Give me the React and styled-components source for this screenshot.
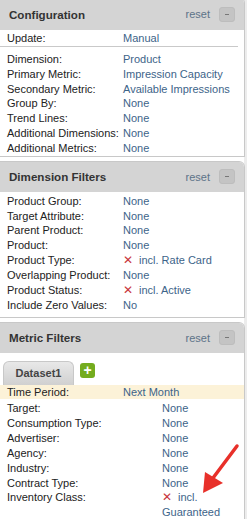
import React from 'react';
import styled, { createGlobalStyle } from 'styled-components';

const Global = createGlobalStyle`
  html, body {
    margin: 0;
    padding: 0;
    background: #fff;
    overflow: hidden;
  }
  body {
    font-family: "Liberation Sans", Arial, Helvetica, sans-serif;
    font-size: 11px;
    color: #222;
  }
`;

const Page = styled.div`
  width: 247px;
  height: 519px;
  overflow: hidden;
  position: relative;
  display: flex;
  flex-direction: column;
  gap: 4px;
  background: linear-gradient(to right, #fff 244px, #ececec 244px);
`;

const Panel = styled.div`
  width: 245px;
  box-sizing: border-box;
  border: 1px solid #c8c8c8;
  border-left: none;
  border-radius: 0 6px 0 0;
  background: #fff;
  margin-top: ${p => (p.$first ? '-3px' : '0')};
  flex-shrink: 0;
`;

const Header = styled.div`
  height: ${p => (p.$first ? '32px' : '30px')};
  box-sizing: border-box;
  padding: 0 9px 0 9px;
  display: flex;
  align-items: center;
  background: #d4d4d4;
  border-radius: 0 5px 0 0;
`;

const Title = styled.div`
  flex: 1;
  font-weight: bold;
  font-size: 11.6px;
  color: #333;
`;

const Reset = styled.span`
  color: #5d7388;
  font-size: 11px;
  margin-right: 9px;
`;

const MinusBtn = styled.span`
  width: 14px;
  height: 13px;
  border-radius: 3px;
  background: #c4c4c4;
  border: 1px solid #bdbdbd;
  display: flex;
  align-items: center;
  justify-content: center;
  &::after {
    content: '';
    width: 4px;
    height: 1px;
    background: #777;
  }
`;

const Body = styled.div`
  padding: ${p => p.$pad || '0'};
`;

const Row = styled.div`
  display: grid;
  grid-template-columns: ${p => p.$col || '116px'} 1fr;
  padding: 0 0 0 7px;
  line-height: 14.85px;
  font-size: 11px;
  background: ${p => (p.$hl ? '#fcf2d8' : 'transparent')};
  border-bottom: ${p => (p.$line ? '1px solid #c9c9c9' : 'none')};
  margin: ${p => (p.$line ? '0 6px 5px 0' : '0')};
`;

const Label = styled.span`
  color: #222;
  white-space: nowrap;
`;

const Value = styled.span`
  color: #3d6489;
`;

const XMark = styled.span`
  color: #c8353a;
  font-size: 12px;
  margin-right: 6px;
`;

const TabBar = styled.div`
  display: flex;
  align-items: flex-end;
  gap: 6px;
  padding: 8px 0 0 3px;
`;

const Tab = styled.div`
  width: 71px;
  height: 24px;
  box-sizing: border-box;
  border: 1px solid #c8c8c8;
  border-bottom: none;
  border-radius: 6px 6px 0 0;
  background: linear-gradient(#e8e8e8, #d0d0d0);
  display: flex;
  align-items: center;
  justify-content: center;
  font-weight: bold;
  font-size: 11px;
  color: #444;
`;

const AddBtn = styled.div`
  width: 15px;
  height: 15px;
  margin-bottom: 7px;
  border-radius: 3px;
  background: #74ac1e;
  color: #fff;
  font-weight: bold;
  font-size: 14px;
  line-height: 15px;
  text-align: center;
`;

const Spacer = styled.div`
  height: 2px;
`;

const Arrow = styled.svg`
  position: absolute;
  left: 196px;
  top: 442px;
`;

const rows1 = [
  ['Dimension:', 'Product'],
  ['Primary Metric:', 'Impression Capacity'],
  ['Secondary Metric:', 'Available Impressions'],
  ['Group By:', 'None'],
  ['Trend Lines:', 'None'],
  ['Additional Dimensions:', 'None'],
  ['Additional Metrics:', 'None'],
];

const rows2 = [
  ['Product Group:', 'None'],
  ['Target Attribute:', 'None'],
  ['Parent Product:', 'None'],
  ['Product:', 'None'],
  ['Product Type:', 'incl. Rate Card', true],
  ['Overlapping Product:', 'None'],
  ['Product Status:', 'incl. Active', true],
  ['Include Zero Values:', 'No'],
];

const rows3 = [
  ['Target:', 'None'],
  ['Consumption Type:', 'None'],
  ['Advertiser:', 'None'],
  ['Agency:', 'None'],
  ['Industry:', 'None'],
  ['Contract Type:', 'None'],
];

const PanelHead = ({ title, first }) => (
  <Header $first={first}>
    <Title>{title}</Title>
    <Reset>reset</Reset>
    <MinusBtn />
  </Header>
);

const Val = ({ text, x }) => (
  <Value>
    {x && <XMark>✕</XMark>}
    {text}
  </Value>
);

export default function App() {
  return (
    <Page>
      <Global />
      <Panel $first>
        <PanelHead title="Configuration" first />
        <Body $pad="1px 0 0 0">
          <Row $line>
            <Label>Update:</Label>
            <Value>Manual</Value>
          </Row>
          {rows1.map(([l, v]) => (
            <Row key={l}>
              <Label>{l}</Label>
              <Val text={v} />
            </Row>
          ))}
        </Body>
      </Panel>

      <Panel>
        <PanelHead title="Dimension Filters" />
        <Body $pad="2px 0 4px 0">
          {rows2.map(([l, v, x]) => (
            <Row key={l}>
              <Label>{l}</Label>
              <Val text={v} x={x} />
            </Row>
          ))}
        </Body>
      </Panel>

      <Panel>
        <PanelHead title="Metric Filters" />
        <TabBar>
          <Tab>Dataset1</Tab>
          <AddBtn>+</AddBtn>
        </TabBar>
        <Body $pad="0 0 3px 0">
          <Row $hl>
            <Label>Time Period:</Label>
            <Value>Next Month</Value>
          </Row>
          <Spacer />
          {rows3.map(([l, v]) => (
            <Row key={l} $col="155px">
              <Label>{l}</Label>
              <Val text={v} />
            </Row>
          ))}
          <Row $col="155px">
            <Label>Inventory Class:</Label>
            <Value>
              <XMark>✕</XMark>incl.
              <br />
              Guaranteed
            </Value>
          </Row>
        </Body>
      </Panel>

      <Arrow width="46" height="54" viewBox="0 0 46 54">
        <line x1="41" y1="4" x2="17" y2="36" stroke="#e8302a" strokeWidth="3.5" strokeLinecap="round" />
        <polygon points="7,51 9,30 27,41" fill="#e8302a" />
      </Arrow>
    </Page>
  );
}
